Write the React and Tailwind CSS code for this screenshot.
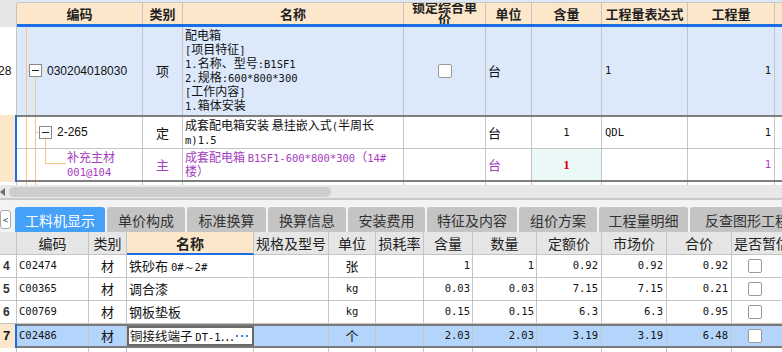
import React from "react";

const M = ({ children, className = "" }) => (
  <span className={"font-['DejaVu_Sans_Mono',monospace] text-[10.5px] " + className}>{children}</span>
);

const L = "border-r border-[#c4c4c4]";
const OR = "bg-[#f6c58c]";
const LN = "h-[14px] leading-[14px] whitespace-nowrap";

function Minus({ className }) {
  return (
    <div className={"absolute w-[13px] h-[13px] border border-[#8a8a8a] bg-white flex items-center justify-center " + className}>
      <div className="w-[7px] h-[1px] bg-[#222]" />
    </div>
  );
}

function Check() {
  return <div className="w-[14px] h-[14px] border border-[#9a9a9a] rounded-[2px] bg-white" />;
}

function TopTable() {
  const h = "shrink-0 h-full flex items-center justify-center border-r border-[#c4c4c4]";
  return (
    <div>
      <div className="flex h-[3px]">
        <div className="w-[17px] bg-[#e6e6e6]" />
        <div className="flex-1 bg-[#dfe8f4] border-b border-[#c8c8c8]" />
      </div>
      <div className="flex h-[21px] text-[13px] font-bold text-[#222] leading-none">
        <div className="w-[17px] shrink-0 bg-[#e6e6e6] border-r border-[#c4c4c4]" />
        <div className="flex flex-1 bg-[#fde7ca]">
          <div className={h + " w-[126px]"}>编码</div>
          <div className={h + " w-[40px]"}>类别</div>
          <div className={h + " w-[221px]"}>名称</div>
          <div className="shrink-0 h-full w-[82px] overflow-hidden border-r border-[#c4c4c4]">
            <div className="text-center leading-[12px] -mt-[2px]">锁定综合单<br />价</div>
          </div>
          <div className={h + " w-[46px]"}>单位</div>
          <div className={h + " w-[70px]"}>含量</div>
          <div className={h + " w-[86px]"}>工程量表达式</div>
          <div className={h + " w-[87px]"}>工程量</div>
          <div className="flex-1" />
        </div>
      </div>
      <div className="flex h-[3px]">
        <div className="w-[17px] bg-[#e6e6e6] border-r border-[#c4c4c4]" />
        <div className="flex-1 bg-[#1a6fe6]" />
      </div>

      {/* row 1 */}
      <div className="flex h-[88px] text-[12px] text-[#111]">
        <div className="w-[17px] shrink-0 bg-white border-r border-[#c4c4c4] flex items-center overflow-hidden">
          <span className="-ml-[2px] font-['Liberation_Sans',sans-serif] text-[12px]">28</span>
        </div>
        <div className="flex flex-1 bg-[#dce9fb]">
          <div className={"relative w-[126px] shrink-0 " + L}>
            <div className={"absolute left-[9px] top-0 bottom-0 w-[1px] " + OR} />
            <div className={"absolute left-[9px] top-[44px] w-[3px] h-[1px] " + OR} />
            <div className={"absolute left-[18px] top-[50px] bottom-0 w-[1px] " + OR} />
            <Minus className="left-[12px] top-[37px]" />
            <span className="absolute left-[30px] top-[37px] leading-[14px] font-['Liberation_Sans',sans-serif] text-[12px]">030204018030</span>
          </div>
          <div className={L + " w-[40px] shrink-0 flex items-center justify-center text-[13px]"}>项</div>
          <div className={L + " w-[221px] shrink-0 px-[2px] pt-[1px]"}>
            <div className={LN}>配电箱</div>
            <div className={LN}><M>[</M>项目特征<M>]</M></div>
            <div className={LN}><M>1.</M>名称、型号<M>:B1SF1</M></div>
            <div className={LN}><M>2.</M>规格<M>:600*800*300</M></div>
            <div className={LN}><M>[</M>工作内容<M>]</M></div>
            <div className={LN}><M>1.</M>箱体安装</div>
          </div>
          <div className={L + " w-[82px] shrink-0 flex items-center justify-center"}><Check /></div>
          <div className={L + " w-[46px] shrink-0 flex items-center pl-[2px] text-[13px]"}>台</div>
          <div className={L + " w-[70px] shrink-0"} />
          <div className={L + " w-[86px] shrink-0 flex items-center pl-[3px]"}><M>1</M></div>
          <div className={L + " w-[87px] shrink-0 flex items-center justify-end pr-[3px]"}><M>1</M></div>
          <div className="flex-1" />
        </div>
      </div>

      <div className="flex h-[2px]">
        <div className="w-[15px] bg-[#fde7ca]" />
        <div className="w-[2px] bg-[#1a6fe6]" />
        <div className="flex-1 bg-[#7f7f7f]" />
      </div>

      <div className="flex">
        <div className="w-[15px] shrink-0 bg-[#fde7ca]" />
        <div className="w-[2px] shrink-0 bg-[#1a6fe6]" />
        <div className="flex-1 flex flex-col text-[12px] text-[#111]">
          {/* row 2 */}
          <div className="flex h-[32px] border-b border-[#c4c4c4] bg-white">
            <div className={"relative w-[126px] shrink-0 " + L}>
              <div className={"absolute left-[9px] top-0 bottom-0 w-[1px] " + OR} />
              <div className={"absolute left-[18px] top-0 bottom-0 w-[1px] " + OR} />
              <div className={"absolute left-[18px] top-[15px] w-[4px] h-[1px] " + OR} />
              <div className={"absolute left-[28px] top-[22px] -bottom-[1px] w-[1px] " + OR} />
              <Minus className="left-[22px] top-[9px]" />
              <span className="absolute left-[40px] top-[8px] leading-[14px] font-['Liberation_Sans',sans-serif] text-[12px]">2-265</span>
            </div>
            <div className={L + " w-[40px] shrink-0 flex items-center justify-center text-[13px]"}>定</div>
            <div className={L + " w-[221px] shrink-0 px-[2px] pt-[1px]"}>
              <div className={LN}>成套配电箱安装 悬挂嵌入式<M>(</M>半周长</div>
              <div className={LN}><M>m)1.5</M></div>
            </div>
            <div className={L + " w-[82px] shrink-0"} />
            <div className={L + " w-[46px] shrink-0 flex items-center pl-[2px] text-[13px]"}>台</div>
            <div className={L + " w-[70px] shrink-0 flex items-center justify-center"}><M>1</M></div>
            <div className={L + " w-[86px] shrink-0 flex items-center pl-[3px]"}><M>QDL</M></div>
            <div className={L + " w-[87px] shrink-0 flex items-center justify-end pr-[3px]"}><M>1</M></div>
            <div className="flex-1" />
          </div>
          {/* row 3 */}
          <div className="flex h-[31px] bg-white text-[#a63cc0]">
            <div className={"relative w-[126px] shrink-0 " + L}>
              <div className={"absolute left-[9px] top-0 bottom-0 w-[1px] " + OR} />
              <div className={"absolute left-[18px] top-0 bottom-0 w-[1px] " + OR} />
              <div className={"absolute left-[28px] top-0 h-[15px] w-[1px] " + OR} />
              <div className={"absolute left-[28px] top-[14px] w-[21px] h-[1px] " + OR} />
              <div className="absolute left-[50px] top-[1px] text-[12px]">
                <div className={LN}>补充主材</div>
                <div className={LN}><M>001@104</M></div>
              </div>
            </div>
            <div className={L + " w-[40px] shrink-0 flex items-center justify-center text-[13px]"}>主</div>
            <div className={L + " w-[221px] shrink-0 px-[2px] pt-[1px] text-[12px]"}>
              <div className={LN}>成套配电箱 <M>B1SF1-600*800*300</M>（<M>14#</M></div>
              <div className={LN}>楼）</div>
            </div>
            <div className={L + " w-[82px] shrink-0"} />
            <div className={L + " w-[46px] shrink-0 flex items-center pl-[2px] text-[13px]"}>台</div>
            <div className={L + " w-[70px] shrink-0 flex items-center justify-center bg-[#eaf8f8]"}>
              <span className="font-['Liberation_Serif',serif] font-bold text-[13px] text-[#e00000]">1</span>
            </div>
            <div className={L + " w-[86px] shrink-0"} />
            <div className={L + " w-[87px] shrink-0 flex items-center justify-end pr-[3px]"}><M>1</M></div>
            <div className="flex-1" />
          </div>
        </div>
      </div>

      <div className="flex h-[2px]">
        <div className="w-[15px] bg-[#fde7ca]" />
        <div className="w-[2px] bg-[#1a6fe6]" />
        <div className="flex-1 bg-[#7f7f7f]" />
      </div>
      <div className="flex h-[3px] bg-white">
        <div className="w-[17px] shrink-0 border-r border-[#c4c4c4]" />
        <div className={"relative w-[126px] shrink-0 " + L}>
          <div className={"absolute left-[9px] top-0 bottom-0 w-[1px] " + OR} />
          <div className={"absolute left-[18px] top-0 bottom-0 w-[1px] " + OR} />
        </div>
        <div className={L + " w-[40px] shrink-0"} />
        <div className={L + " w-[221px] shrink-0"} />
        <div className={L + " w-[82px] shrink-0"} />
        <div className={L + " w-[46px] shrink-0"} />
        <div className={L + " w-[70px] shrink-0"} />
        <div className={L + " w-[86px] shrink-0"} />
        <div className={L + " w-[87px] shrink-0"} />
      </div>
    </div>
  );
}

function Scroll() {
  return (
    <div>
      <div className="flex items-center h-[13px] bg-[#e8e8e8]">
        <div className="w-0 h-0 border-y-[4px] border-y-transparent border-r-[5px] border-r-[#6f6f6f]" />
        <div className="ml-[4px] w-[322px] h-[10px] rounded-full bg-[#cdcdcd]" />
      </div>
      <div className="h-[2px] bg-[#c9c9c9]" />
    </div>
  );
}

function Tabs() {
  const t = "shrink-0 h-full flex items-center justify-center rounded-t-[3px] bg-[#c4c4c4] text-[#333] whitespace-nowrap overflow-hidden";
  return (
    <div className="flex h-[32px] pt-[7px] bg-[#f3f3f3] text-[14px] leading-none overflow-hidden">
      <div className="shrink-0 w-[11px] h-[19px] mt-[3px] border border-[#a8a8a8] rounded-[3px] bg-white flex items-center justify-center text-[10px] text-[#444]">&lt;</div>
      <div className="flex gap-[2px] ml-[4px] h-full">
        <div className="shrink-0 h-full w-[90px] flex items-center justify-center rounded-t-[3px] bg-[#45a0f8] text-white">工料机显示</div>
        <div className={t + " w-[78px]"}>单价构成</div>
        <div className={t + " w-[79px]"}>标准换算</div>
        <div className={t + " w-[78px]"}>换算信息</div>
        <div className={t + " w-[77px]"}>安装费用</div>
        <div className={t + " w-[90px]"}>特征及内容</div>
        <div className={t + " w-[78px]"}>组价方案</div>
        <div className={t + " w-[89px]"}>工程量明细</div>
        <div className={t + " w-[128px]"}>反查图形工程量</div>
      </div>
    </div>
  );
}

function BRow({ n, code, name, unit, mono, han, shu, de, shi, he, sel }) {
  const c = "shrink-0 h-full border-r border-[#c4c4c4] flex items-center whitespace-nowrap overflow-hidden";
  return (
    <div className={"flex text-[13px] text-[#111] " + (sel ? "h-[24px]" : "h-[23px]")}>
      {sel ? (
        <div className="w-[17px] shrink-0 flex">
          <div className="w-[15px] bg-[#fde7ca] flex items-center pl-[3px] font-bold text-[13px] font-['Liberation_Sans',sans-serif]">{n}</div>
          <div className="w-[2px] bg-[#1a6fe6]" />
        </div>
      ) : (
        <div className="w-[17px] shrink-0 border-r border-b border-[#c4c4c4] flex items-center pl-[3px] font-bold text-[12px] font-['Liberation_Sans',sans-serif] text-[#333]">{n}</div>
      )}
      <div className={"flex flex-1 " + (sel ? "bg-[#b4d5fb] border-y-2 border-[#7a7a7a]" : "border-b border-[#c4c4c4] bg-white")}>
        <div className={c + " w-[72px] pl-[2px]"}><M>{code}</M></div>
        <div className={c + " w-[38px] justify-center"}>材</div>
        {sel ? (
          <div className="shrink-0 h-full w-[127px] border-2 border-[#6a6a6a] bg-white flex items-center pl-[1px] pr-[4px] whitespace-nowrap overflow-hidden">
            <span className="min-w-0 overflow-hidden text-[12.5px]">铜接线端子 <M>DT-1</M>…</span>
            <span className="ml-auto shrink-0 flex gap-[3px] items-center">
              <span className="w-[2px] h-[2px] bg-[#3a8ad8]" />
              <span className="w-[2px] h-[2px] bg-[#3a8ad8]" />
              <span className="w-[2px] h-[2px] bg-[#3a8ad8]" />
            </span>
          </div>
        ) : (
          <div className={c + " w-[127px] pl-[2px]"}>{name}</div>
        )}
        <div className={c + " w-[75px]"} />
        <div className={c + " w-[47px] justify-center"}>{mono ? <M>{unit}</M> : unit}</div>
        <div className={c + " w-[48px]"} />
        <div className={c + " w-[49px] justify-end pr-[2px]"}><M>{han}</M></div>
        <div className={c + " w-[64px] justify-end pr-[2px]"}><M>{shu}</M></div>
        <div className={c + " w-[65px] justify-end pr-[3px]"}><M>{de}</M></div>
        <div className={c + " w-[65px] justify-end pr-[3px]"}><M>{shi}</M></div>
        <div className={c + " w-[65px] justify-end pr-[3px]"}><M>{he}</M></div>
        <div className="flex-1 h-full flex items-center justify-center pr-[4px]"><Check /></div>
      </div>
    </div>
  );
}

function BottomTable() {
  const h = "shrink-0 h-full flex items-center justify-center border-r border-b border-[#c4c4c4]";
  return (
    <div>
      <div className="flex h-[23px] bg-[#e6e6e6] text-[14px] text-[#222] leading-none">
        <div className={h + " w-[17px]"} />
        <div className={h + " w-[72px]"}>编码</div>
        <div className={h + " w-[38px]"}>类别</div>
        <div className="shrink-0 h-full w-[127px] flex items-center justify-center border-r border-[#c4c4c4] border-b-2 border-b-[#1a6fe6] bg-[#fde7ca] font-bold">名称</div>
        <div className={h + " w-[75px]"}>规格及型号</div>
        <div className={h + " w-[47px]"}>单位</div>
        <div className={h + " w-[48px]"}>损耗率</div>
        <div className={h + " w-[49px]"}>含量</div>
        <div className={h + " w-[64px]"}>数量</div>
        <div className={h + " w-[65px]"}>定额价</div>
        <div className={h + " w-[65px]"}>市场价</div>
        <div className={h + " w-[65px]"}>合价</div>
        <div className="flex-1 h-full flex items-center pl-[2px] border-b border-[#c4c4c4] whitespace-nowrap overflow-hidden">是否暂估</div>
      </div>
      <BRow n="4" code="C02474" name={<span>铁砂布 <M>0#～2#</M></span>} unit="张" han="1" shu="1" de="0.92" shi="0.92" he="0.92" />
      <BRow n="5" code="C00365" name="调合漆" unit="kg" mono han="0.03" shu="0.03" de="7.15" shi="7.15" he="0.21" />
      <BRow n="6" code="C00769" name="钢板垫板" unit="kg" mono han="0.15" shu="0.15" de="6.3" shi="6.3" he="0.95" />
      <BRow n="7" code="C02486" unit="个" han="2.03" shu="2.03" de="3.19" shi="3.19" he="6.48" sel />
      <div className="flex h-[4px] bg-white">
        <div className="w-[17px] shrink-0 border-r border-[#c4c4c4]" />
        <div className={L + " w-[72px] shrink-0"} />
        <div className={L + " w-[38px] shrink-0"} />
        <div className={L + " w-[127px] shrink-0"} />
        <div className={L + " w-[75px] shrink-0"} />
        <div className={L + " w-[47px] shrink-0"} />
        <div className={L + " w-[48px] shrink-0"} />
        <div className={L + " w-[49px] shrink-0"} />
        <div className={L + " w-[64px] shrink-0"} />
        <div className={L + " w-[65px] shrink-0"} />
        <div className={L + " w-[65px] shrink-0"} />
        <div className={L + " w-[65px] shrink-0"} />
      </div>
    </div>
  );
}

export default function App() {
  return (
    <div className="w-[782px] h-[352px] overflow-hidden bg-white font-['Noto_Sans_CJK_SC',sans-serif]">
      <TopTable />
      <Scroll />
      <Tabs />
      <BottomTable />
    </div>
  );
}
